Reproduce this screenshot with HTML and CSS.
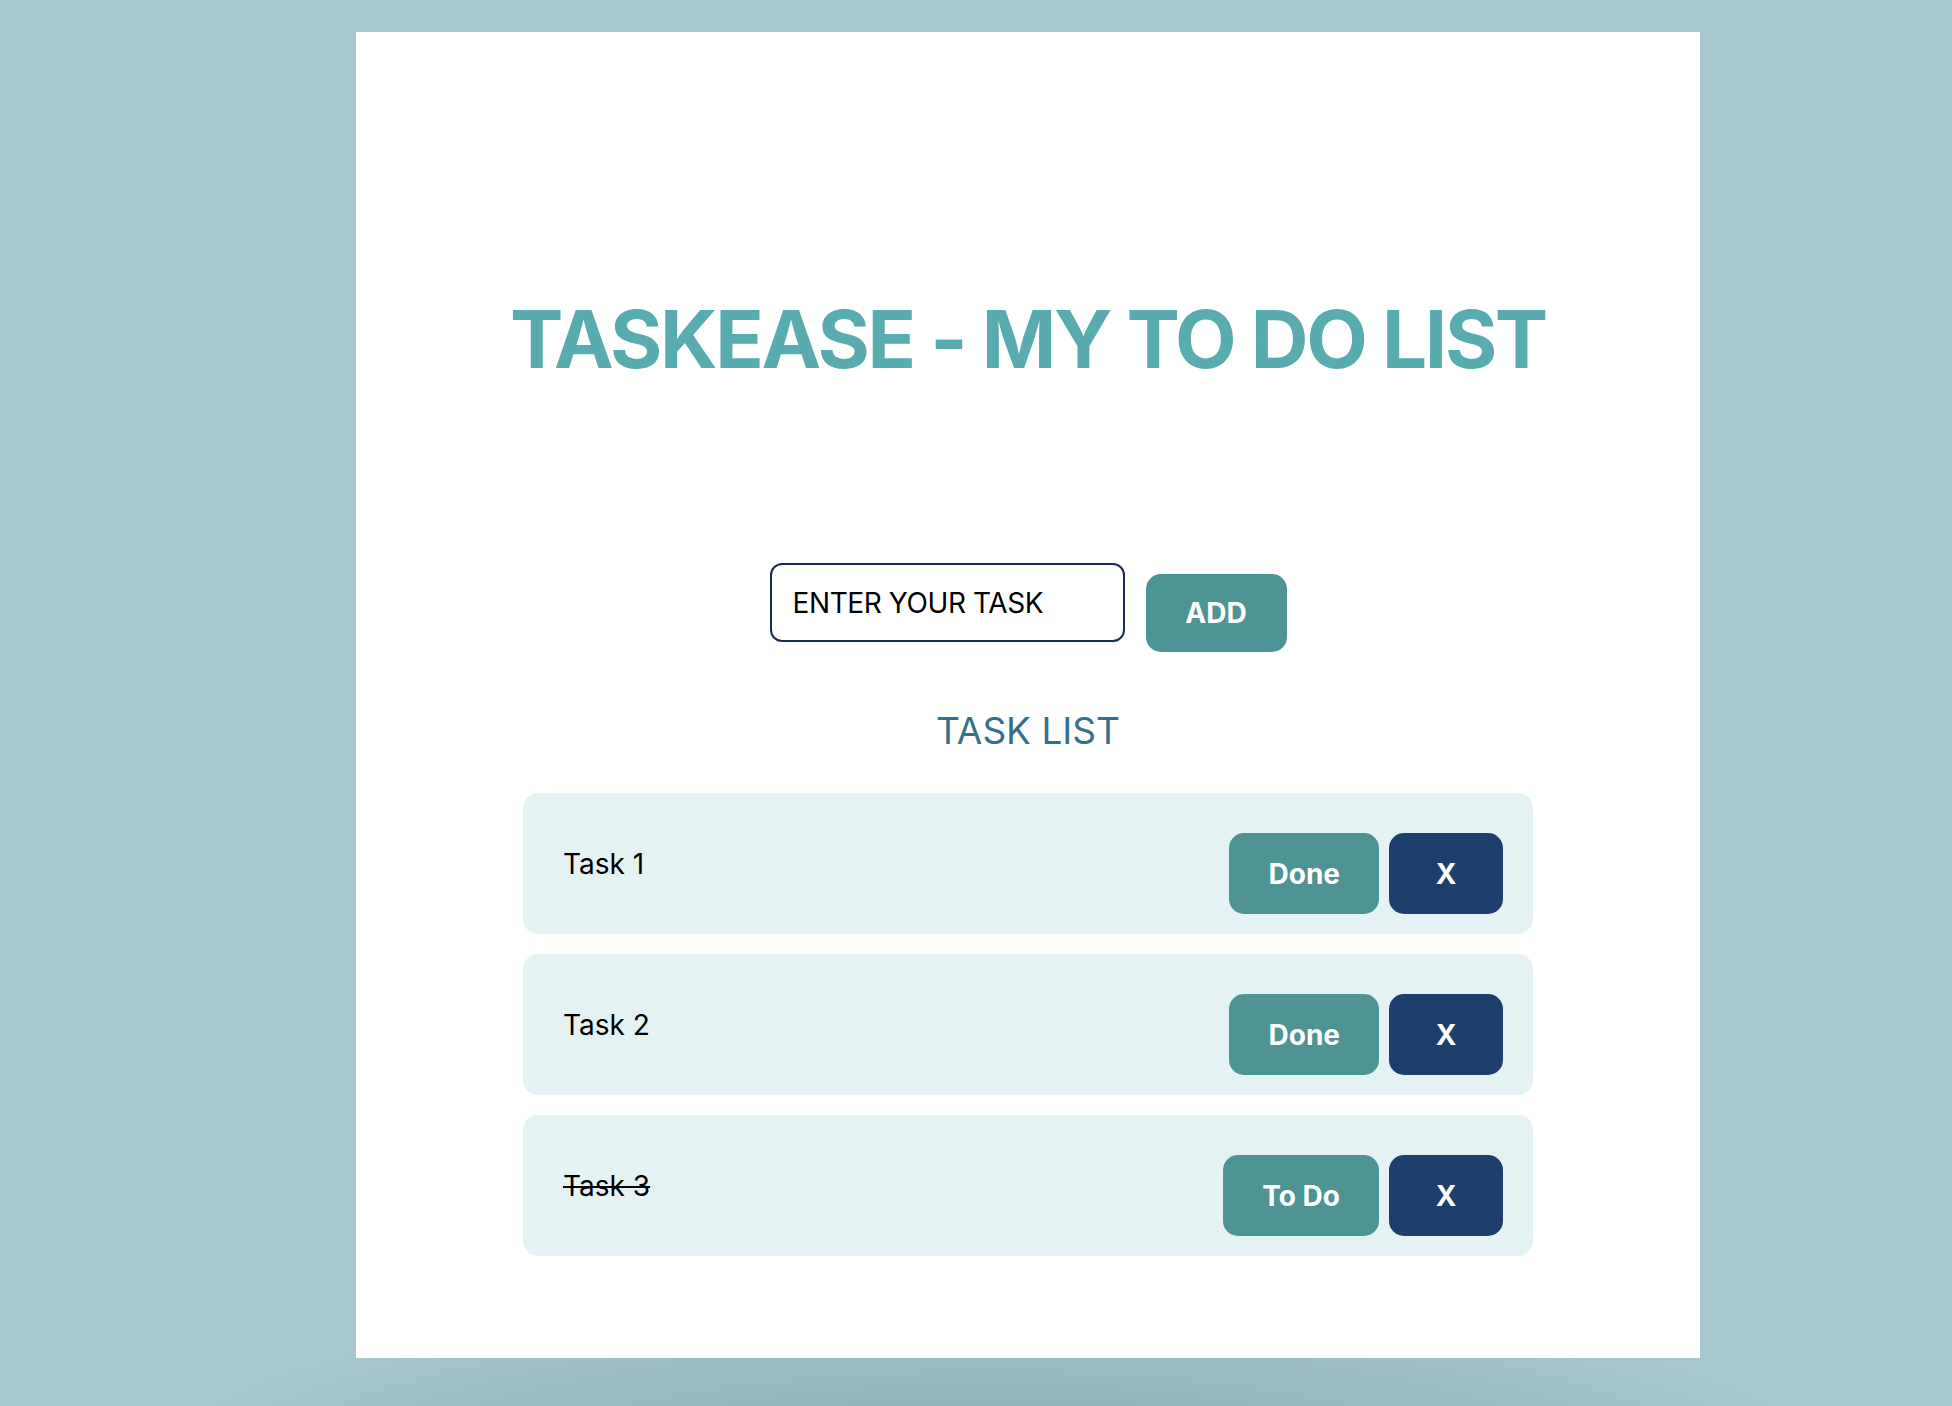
FILE: index.html
```html
<!DOCTYPE html>
<html lang="en">
<head>
<meta charset="utf-8">
<title>TaskEase - My To Do List</title>
<link rel="stylesheet" href="styles.css">
</head>
<body>
  <main class="card">
    <h1 class="title">TASKEASE - MY TO DO LIST</h1>
    <div class="add-row">
      <input class="task-input" type="text" placeholder="ENTER YOUR TASK">
      <button class="btn btn-teal btn-add">ADD</button>
    </div>
    <h2 class="list-title">TASK LIST</h2>
    <ul class="tasks">
      <li class="task">
        <span class="task-name">Task 1</span>
        <div class="task-actions">
          <button class="btn btn-teal btn-toggle">Done</button>
          <button class="btn btn-navy btn-del">X</button>
        </div>
      </li>
      <li class="task">
        <span class="task-name">Task 2</span>
        <div class="task-actions">
          <button class="btn btn-teal btn-toggle">Done</button>
          <button class="btn btn-navy btn-del">X</button>
        </div>
      </li>
      <li class="task">
        <span class="task-name done">Task 3</span>
        <div class="task-actions">
          <button class="btn btn-teal btn-toggle">To Do</button>
          <button class="btn btn-navy btn-del">X</button>
        </div>
      </li>
    </ul>
  </main>
</body>
</html>
```

FILE: styles.css
```css
* { box-sizing: border-box; }

html, body {
  margin: 0;
  padding: 0;
}

body {
  background-color: #a5c7cd;
  background-image: radial-gradient(ellipse 860px 190px at 990px 1480px, rgba(40, 80, 90, 0.26), rgba(40, 80, 90, 0) 100%);
  background-repeat: no-repeat;
  font-family: Inter, "Noto Sans", sans-serif;
  min-height: 1406px;
  overflow: hidden;
}

.card {
  width: 1344px;
  height: 1326px;
  margin: 32px 0 0 356px;
  background: #ffffff;
  padding-top: 267px;
  display: flex;
  flex-direction: column;
  align-items: center;
}

.title {
  margin: 0;
  font-size: 80px;
  line-height: 80px;
  font-weight: 700;
  color: #58acb0;
  letter-spacing: -2.4px;
  white-space: nowrap;
}

.add-row {
  margin-top: 184px;
  display: flex;
  align-items: flex-start;
  gap: 21px;
}

.task-input {
  width: 355px;
  height: 79px;
  border: 2px solid #1c2b50;
  border-radius: 12px;
  padding: 0 21px;
  font-family: Inter, "Noto Sans", sans-serif;
  font-size: 28px;
  letter-spacing: -0.4px;
  color: #000;
  outline: none;
  background: #fff;
}

.task-input::placeholder {
  color: #000;
  opacity: 1;
}

.btn {
  border: none;
  border-radius: 15px;
  color: #ffffff;
  font-family: Inter, "Noto Sans", sans-serif;
  font-weight: 700;
  font-size: 28px;
  cursor: pointer;
  padding: 0;
}

.btn-teal { background: #4e9494; }
.btn-navy { background: #1c3f6e; }

.btn-add {
  width: 141px;
  height: 78px;
  margin-top: 11px;
}

.list-title {
  margin: 56px 0 0;
  font-size: 37px;
  line-height: 46px;
  font-weight: 400;
  color: #35708a;
}

.tasks {
  list-style: none;
  margin: 39px 0 0;
  padding: 0;
  width: 1010px;
  display: flex;
  flex-direction: column;
  gap: 20px;
}

.task {
  height: 141px;
  background: #e4f2f3;
  border-radius: 15px;
  padding: 0 30px 0 40px;
  display: flex;
  align-items: center;
  justify-content: space-between;
}

.task-name {
  font-size: 28px;
  line-height: 34px;
  color: #000;
}

.task-name.done {
  text-decoration: line-through;
}

.task-actions {
  display: flex;
  gap: 10px;
  margin-top: 20px;
}

.btn-toggle {
  height: 81px;
  padding: 0 39px;
}

.btn-del {
  width: 114px;
  height: 81px;
}
```
